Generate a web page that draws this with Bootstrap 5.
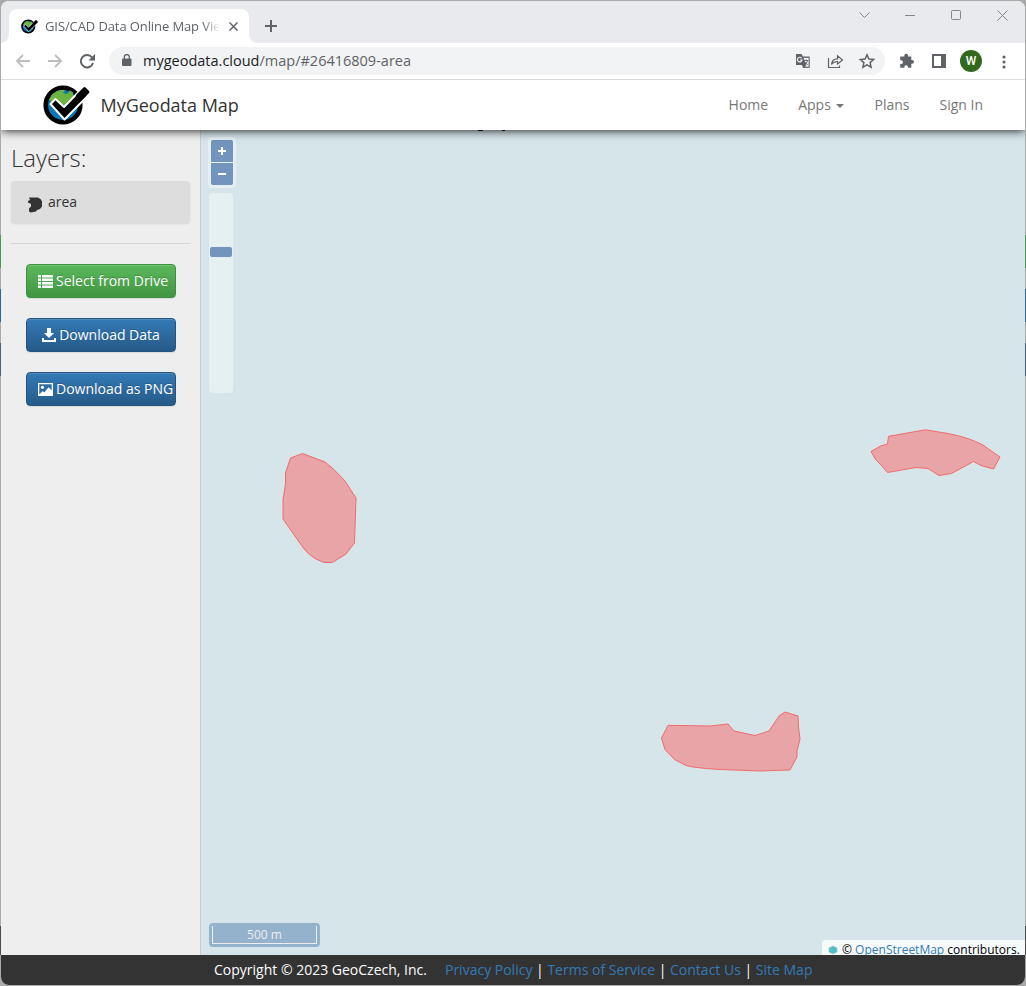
<!DOCTYPE html>
<html lang="en">
<head>
<meta charset="utf-8">
<meta name="viewport" content="width=device-width, initial-scale=1">
<title>GIS/CAD Data Online Map Viewer</title>
<link rel="stylesheet" href="https://cdn.jsdelivr.net/npm/bootstrap@5.3.0/dist/css/bootstrap.min.css">
<style>
html,body{height:986px;overflow:hidden}
body{font:14px/20px "Open Sans",sans-serif;color:#333;background:linear-gradient(#aaa 235px,#4b9a4b 235px 268px,#aaa 268px 289px,#2f6598 289px 322px,#aaa 322px 343px,#4a6280 343px 376px,#aaa 376px 926px,#4a4a4a 926px 955px,#aaa 955px);padding:1px}
svg{display:block;flex:none}
.win{width:1024px;height:984px;border-radius:8px;overflow:hidden;background:#fff}
.tabstrip{height:42px;background:#e8eaed}
.tabstrip .tab{width:240px;height:34px;margin:8px 0 0 8px;border-radius:8px 8px 0 0;background:#fff;padding-left:12px;position:relative}
.tab::before,.tab::after{content:"";position:absolute;bottom:0;width:8px;height:8px}
.tab::before{left:-8px;background:radial-gradient(circle at 0 0,transparent 7.5px,#fff 8px)}
.tab::after{right:-8px;background:radial-gradient(circle at 100% 0,transparent 7.5px,#fff 8px)}
.tab-title{width:175px;margin-left:7px;margin-right:1px;font:13px/18px "Open Sans",sans-serif;color:#5f6368;-webkit-mask-image:linear-gradient(90deg,#000 158px,transparent 175px);letter-spacing:-.1px}
.toolbar{height:37px;border-bottom:1px solid #dadce0;background:#fff;z-index:6}
.omnibox{width:776px;height:28px;border-radius:14px;background:#f1f3f4;margin:4px 0 0 13px;font:14.5px/28px "Open Sans",sans-serif;color:#5f6368;padding-left:13px}
.omnibox b{font-weight:400;color:#202124}
.avatar{width:22px;height:22px;border-radius:50%;background:#33691e;color:#fff;font:500 12px/22px Roboto,sans-serif;text-align:center;margin-top:7px}
.site-nav{height:50px;box-shadow:0 0 10px #000;z-index:5;padding-left:42px;padding-right:42px;background:#fff}
.brand-text{font-size:18px;line-height:24px;margin-left:10.500px;letter-spacing:-.02px}
.site-nav .nav-link{color:#777;padding:0}
.caret{display:inline-block;border:4px solid transparent;border-top-color:#777;border-bottom:0;margin-left:2px;vertical-align:middle}
.page-body{height:825px}
.sidebar{width:200px;border-right:1px solid #ccc;background:#eee;padding:13px 10px 0}
.sidebar h1{font-size:24px;line-height:30px;font-weight:300;margin:0 0 8px}
.layer{height:42px;border-radius:4px;background:#ddd;box-shadow:0 1px 2px rgba(0,0,0,.1);padding-left:16px}
.sidebar hr{margin:20px 0;border-top:1px solid #d5d8d8;opacity:1}
.side-btn{height:34px;width:150px;margin:0 15px 20px;padding:0;border-radius:4px;font-size:14px;line-height:20px;white-space:nowrap;color:#fff;text-shadow:0 -1px 0 rgba(0,0,0,.2);box-shadow:inset 0 1px 0 rgba(255,255,255,.15),0 1px 1px rgba(0,0,0,.075);gap:3px}
.side-green{background:linear-gradient(#5cb85c,#419641);border-color:#3e8f3e}
.side-blue{background:linear-gradient(#337ab7,#265a88);border-color:#245580}
.map-area{background:#d6e5ea;overflow:hidden}
.zoom-box{position:absolute;left:7px;top:7px;width:28px;height:51px;border-radius:4px;background:#e6eff2;padding:3px}
.zoom-key{height:22px;background:#7394bd;margin-bottom:1px}
.zoom-key:first-child{border-radius:2px 2px 0 0}.zoom-key:last-child{border-radius:0 0 2px 2px}
.zoom-slide{position:absolute;left:8px;top:63px;width:24px;height:200px;border-radius:4px;background:#e6eff1;padding:54px 1px}
.zoom-thumb{height:10px;border-radius:2px;background:#7394bd}
.scale-box{position:absolute;left:8px;top:793px;width:111px;height:24px;border-radius:4px;background:#95b2cd;padding:3px}
.scale-line{height:18px;border:1px solid #eee;border-top:0;color:#eee;font-size:12px;line-height:17px;text-align:center}
.credits{position:absolute;right:0;top:810px;width:203px;height:15px;border-radius:4px 0 0;background:#f7fafb;color:#000;font-size:12px;line-height:19px;padding-left:6px;white-space:nowrap}
.credits a{color:#337ab7;text-decoration:underline}
.site-footer{height:30px;background:#333;color:#fff;padding-left:213px;white-space:nowrap}
.site-footer a{color:#337ab7;text-decoration:none}
</style>
</head>
<body>
<svg width="0" height="0" class="position-absolute"><defs>
<symbol id="logo" viewBox="0 0 47 40">
<circle cx="20" cy="20" r="17.3" fill="#0878bd" stroke="#000" stroke-width="4.600"/>
<path d="M6 15Q9 7 17 5L22 5 20 8l4 1 3-3 4 5-2 3-6 7-6-3-3 4-5-5z" fill="#6cb33f"/><path d="M26 5l5 3-3 2z" fill="#6cb33f"/>
<path d="M7.500 19L12.500 14l8.500 8L38 4.500l7 6L21.500 34.500z" stroke="#fff" stroke-width="2" stroke-linejoin="round"/>
<path d="M33 10l7.500-7.500q1-1 2 0l3.500 3.500q1 1 0 2L36 18l-4 0z"/>
</symbol></defs></svg>
<div class="win d-flex flex-column">
<div class="tabstrip d-flex flex-shrink-0">
  <div class="tab d-flex align-items-center">
    <svg width="17" height="15"><use href="#logo"/></svg>
    <div class="tab-title overflow-hidden text-nowrap">GIS/CAD Data Online Map View</div>
    <svg width="11" height="11" viewBox="0 0 11 11" stroke="#5f6368" stroke-width="1.500" style="margin-left:7px"><path d="M1.500 1.500l8 8M9.500 1.500l-8 8"/></svg>
  </div>
  <svg width="14" height="14" viewBox="0 0 14 14" style="margin:18px 0 0 15px" stroke="#5f6368" stroke-width="2"><path d="M7 1v12M1 7h12"/></svg>
  <svg class="ms-auto" width="156" height="20" viewBox="0 0 156 20" style="margin:4px 12px 0 0" fill="none" stroke="#858689"><path d="M2.500 7.500l5 5 5-5M48 10.500h10"/><rect x="94.500" y="5.500" width="9" height="9" rx="1"/><path d="M140.500 5.500l10 10M150.500 5.500l-10 10"/></svg>
</div>
<div class="toolbar d-flex flex-shrink-0 position-relative">
  <svg width="82" height="20" viewBox="0 0 82 20" style="margin:8px 0 0 13px" fill="none" stroke-width="1.800"><path stroke="#bbbdbf" d="M16 10H3M9 4L3 10l6 6M34 10h13M41 4l6 6-6 6"/><path stroke="#5f6368" stroke-width="2" d="M78 6.500A6.200 6.200 0 1 0 79 12"/><path fill="#5f6368" d="M81 3v6.500h-6.500z"/></svg>
  <div class="omnibox d-flex">
    <svg width="10" height="14" viewBox="0 0 10 14" style="margin:7px 11px 0 0"><rect x="0" y="4.500" width="9.500" height="7.500" rx="1" fill="#5f6368"/><path d="M2.300 5V3a2.500 2.500 0 0 1 5 0v2" fill="none" stroke="#5f6368" stroke-width="1.300"/></svg>
    <span class="url text-nowrap"><b>mygeodata.cloud</b>/map/#26416809-area</span>
    <svg class="ms-auto" width="80" height="16" viewBox="0 0 80 16" style="margin:6px 10px 0 0">
      <path d="M1 1h5.500L8 3.500h6.500V15H8l-1-3H1z" fill="#5f6368"/><path d="M8 4.500H14v9.700H9.500L11 12z" fill="#f1f3f4" stroke="#5f6368" stroke-width=".8"/><path d="M6.600 5.200A2.300 2.300 0 1 0 7 7H5" fill="none" stroke="#f1f3f4" stroke-width="1.200"/><path d="M9.200 7.500H13.300M11.200 6.500v1M12.500 7.700c-.5 2-1.500 3-3 3.800M9.800 9l3 2.800" fill="none" stroke="#5f6368" stroke-width=".9"/>
      <path d="M33.500 5v9.500H44.500V12.500M36.500 11.500Q37 5.800 42.500 5.800V2.800l5 4.200-5 4V8.500Q38.500 8.500 36.500 11.500z" fill="none" stroke="#5f6368" stroke-width="1.200"/>
      <path d="M72 1.800l1.900 4.300 4.700.4-3.500 3.100 1 4.600-4.100-2.400-4.100 2.400 1-4.600-3.500-3.100 4.700-.4z" fill="none" stroke="#5f6368" stroke-width="1.500"/>
    </svg>
  </div>
  <svg width="48" height="18" viewBox="0 0 48 18" style="margin:9px 14px 0 13px" fill="#5f6368"><path d="M3 4.500h3.300V3.600a1.900 1.900 0 0 1 3.800 0v.9h3.200v3.400h.8a1.900 1.900 0 0 1 0 3.800h-.8v4H10V15a1.800 1.800 0 0 0-3.600 0v.7H2.200v-3.600H3a1.900 1.900 0 0 0 0-3.800h-.8V4.500z"/><path fill-rule="evenodd" d="M34 2h14v14H34zm2 2v10h7V4z"/></svg>
  <div class="avatar">W</div>
  <svg width="4" height="14" viewBox="0 0 4 14" style="margin:12px 0 0 20px" fill="#5f6368"><circle cx="2" cy="2" r="1.600"/><circle cx="2" cy="7" r="1.600"/><circle cx="2" cy="12" r="1.600"/></svg>
</div>
<nav class="site-nav d-flex align-items-center position-relative flex-shrink-0">
  <svg width="47" height="40"><use href="#logo"/></svg>
  <span class="brand-text">MyGeodata Map</span>
  <div class="nav ms-auto" style="gap:30px"><a class="nav-link" href="#">Home</a><a class="nav-link" href="#">Apps <span class="caret"></span></a><a class="nav-link" href="#">Plans</a><a class="nav-link" href="#">Sign In</a></div>
</nav>
<main class="page-body d-flex flex-shrink-0">
  <aside class="sidebar flex-shrink-0">
    <h1>Layers:</h1>
    <div class="layer d-flex align-items-center"><svg width="16" height="17" viewBox="0 0 16 17" style="margin:4px 5px 0 0"><path d="M2 1.500h9l3 2 1 2v5l-2 2.500-3 1-1 1.500-5 1-2-1v-3l2-2V8L1 6.500V5l2-1z" fill="#333"/></svg>area</div>
    <hr>
    <button class="btn side-btn side-green d-flex align-items-center" style="padding-left:11px"><svg width="15" height="13" viewBox="0 0 15 13" fill="#fff"><path d="M0 0h3v2.500H0zM4 0h11v2.500H4zM0 3.500h3V6H0zM4 3.500h11V6H4zM0 7h3v2.500H0zM4 7h11v2.500H4zM0 10.500h3V13H0zM4 10.500h11V13H4z"/></svg>Select from Drive</button>
    <button class="btn side-btn side-blue d-flex align-items-center justify-content-center"><svg width="14" height="14" viewBox="0 0 14 14" fill="#fff"><path d="M5 0h4v5h3L7 10 2 5h3zM0 10h2v2h10v-2h2v4H0z"/></svg>Download Data</button>
    <button class="btn side-btn side-blue d-flex align-items-center" style="padding-left:11px"><svg width="15" height="13" viewBox="0 0 15 13" fill="#fff"><path fill-rule="evenodd" d="M0 0h15v13H0zm1.300 1.300v10l3.200-3 2 1 4-5 3.200 3V1.300z"/><circle cx="4.500" cy="4.300" r="1.600"/></svg>Download as PNG</button>
  </aside>
  <section class="map-area flex-grow-1 position-relative">
    <svg width="824" height="825" viewBox="201 130 824 825" fill="#e8a4a6" stroke="#f06b6e" stroke-width="1">
      <path d="M290.500 458L302.500 453.500 325 462 334 469.500 345 481 356 498 354.500 543 346 554 332.500 562.500 324 562.500 315 558.500Q307 553.500 303 547.500L283 519V500L285.500 484V473z"/>
      <path d="M888.500 436.300L925.500 429.800 948 433.500Q969 437.500 983 445L1000 457 993.500 469 981 465.500 973.500 461.500 951.500 473.500 939 475.500 928 468.500 916 467.500 887.500 472.500 882 466 875.500 459.500 871 451.500 880.500 446 887.500 444z"/>
      <path d="M668 725.300L710 726 728 724 734 731 755 735.500 769 731 779 716 785 712 798 716 798.500 727 800 739 797 751V757L790 770 760 771 720 769.500Q689 767.500 685 765L674.500 759.500 665 749.500 661.500 738z"/>
      <path d="M478 130.500h5M502 130.500h3" stroke="#222"/>
    </svg>
    <div class="zoom-box"><div class="zoom-key"><svg width="22" height="22" stroke="#fff" stroke-width="2"><path d="M11 7v8M7 11h8"/></svg></div><div class="zoom-key"><svg width="22" height="22" stroke="#fff" stroke-width="2"><path d="M7 11h8"/></svg></div></div>
    <div class="zoom-slide"><div class="zoom-thumb"></div></div>
    <div class="scale-box"><div class="scale-line">500 m</div></div>
    <div class="credits d-flex"><svg width="10" height="10" viewBox="0 0 10 10" style="margin:5px 4px 0 0"><path d="M5 1l4 2v4L5 9 1 7V3z" fill="#4fc1cd" stroke="#a7bdc3" stroke-width=".7"/></svg><span class="cr-text">© <a href="#">OpenStreetMap</a> contributors.</span></div>
  </section>
</main>
<footer class="site-footer d-flex align-items-center flex-shrink-0"><span>Copyright © 2023 GeoCzech, Inc.</span><span style="margin-left:18px"><a href="#">Privacy Policy</a> | <a href="#">Terms of Service</a> | <a href="#">Contact Us</a> | <a href="#">Site Map</a></span></footer>
</div>
</body>
</html>
